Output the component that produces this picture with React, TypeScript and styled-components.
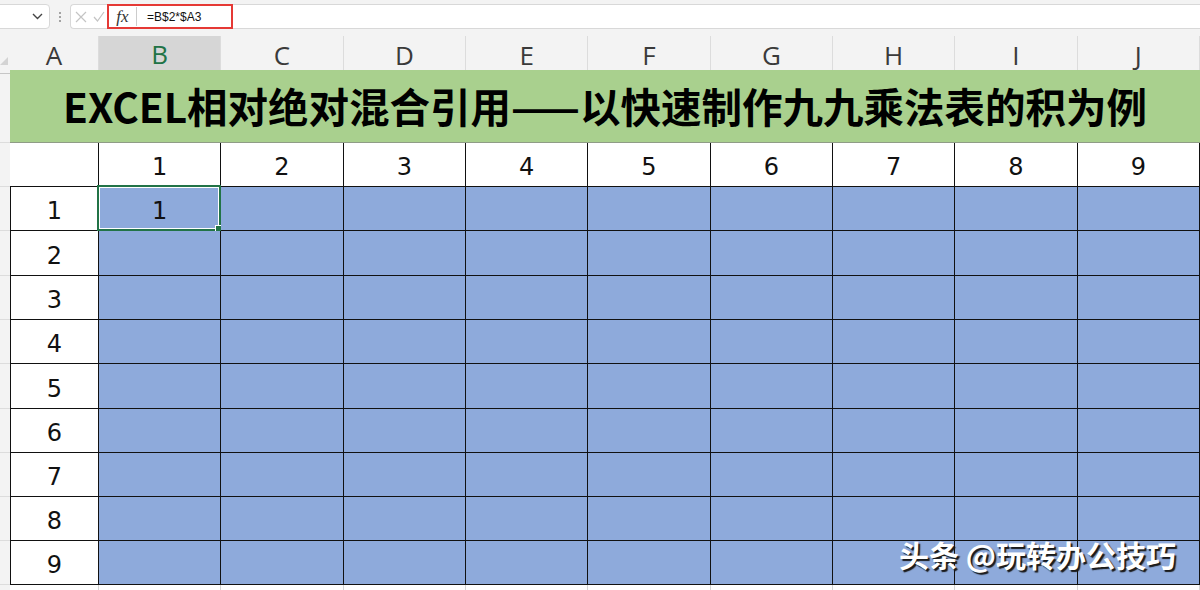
import React from 'react'
import styled, { createGlobalStyle, css } from 'styled-components'

const colors = {
    green: '#217346',
    title: '#a9d08e',
    blue: '#8eaadb',
    header: '#f3f3f3',
    headerSel: '#d6d6d6',
    grid: '#d4d4d4',
    red: '#e53935',
}

const GlobalStyle = createGlobalStyle`
    * { box-sizing: border-box; }
    html, body { margin: 0; padding: 0; background: #fff; }
    body { font-family: 'Noto Sans', 'Noto Sans CJK SC', sans-serif; overflow: hidden; }
`

const Page = styled.div`
    position: relative;
    width: 1200px;
    height: 590px;
    overflow: hidden;
    background: #fff;
`

const FormulaBar = styled.div`
    height: 36px;
    display: flex;
    align-items: center;
    gap: 9px;
    padding: 0 0 3px 0;
    background: ${colors.header};
`

const NameBox = styled.div`
    width: 56px;
    height: 25px;
    margin-left: -6px;
    background: #fff;
    border: 1px solid #d8d8d8;
    border-radius: 4px;
    display: flex;
    align-items: center;
    justify-content: flex-end;
    padding-right: 6px;
`

const Dots = styled.div`
    display: flex;
    flex-direction: column;
    gap: 2px;
    span {
        width: 2px;
        height: 2px;
        background: #888;
        border-radius: 50%;
    }
`

const FormulaBox = styled.div`
    flex: 1;
    height: 25px;
    background: #fff;
    border: 1px solid #d8d8d8;
    border-right: none;
    border-radius: 4px 0 0 4px;
    display: flex;
    align-items: center;
    padding-left: 4px;
    gap: 6px;
`

const RedFrame = styled.div`
    display: flex;
    align-items: center;
    height: 25px;
    width: 126px;
    border: 2px solid ${colors.red};
    margin-left: -4px;
`

const Fx = styled.span`
    font-family: 'Liberation Serif', serif;
    font-style: italic;
    font-size: 17px;
    color: #333;
    width: 28px;
    text-align: center;
    border-right: 1px solid #ccc;
    line-height: 19px;
`

const FormulaText = styled.span`
    font-family: 'Liberation Sans', sans-serif;
    font-size: 12px;
    color: #111;
    padding-left: 10px;
`

const Row = styled.div<{ $h: number }>`
    display: grid;
    grid-template-columns: 10px 89px repeat(9, 1fr);
    height: ${(p) => p.$h}px;
`

const Corner = styled.div`
    background: ${colors.header};
    border-bottom: 1px solid #c6c6c6;
    position: relative;
    &:after {
        content: '';
        position: absolute;
        left: 0;
        bottom: 8px;
        border-left: 8px solid transparent;
        border-bottom: 8px solid #d3d3d3;
    }
`

const ColHead = styled.div<{ $sel?: boolean }>`
    display: flex;
    align-items: center;
    justify-content: center;
    font-family: 'Open Sans', sans-serif;
    font-size: 26px;
    color: #3a3a3a;
    background: ${colors.header};
    border-right: 1px solid #dcdcdc;
    border-bottom: 1px solid #c6c6c6;
    ${(p) =>
        p.$sel &&
        css`
            background: ${colors.headerSel};
            color: ${colors.green};
            border-bottom: 2px solid ${colors.green};
        `}
`

const RowHead = styled.div`
    background: ${colors.header};
    border-bottom: 1px solid #dcdcdc;
`

const Title = styled.div`
    grid-column: 2 / span 10;
    background: ${colors.title};
    border-bottom: 1px solid #8f9c86;
    display: flex;
    align-items: center;
    justify-content: center;
    font-family: 'Noto Sans CJK SC', sans-serif;
    font-weight: 700;
    font-size: 40.5px;
    color: #000;
    padding-bottom: 1px;
`

const Cell = styled.div<{ $fill?: boolean; $left?: boolean; $empty?: boolean }>`
    position: relative;
    display: flex;
    align-items: center;
    justify-content: center;
    font-family: 'DejaVu Sans', sans-serif;
    font-size: 24px;
    color: #111;
    padding-top: 5px;
    background: ${(p) => (p.$fill ? colors.blue : '#fff')};
    border-right: 1px solid #111;
    border-bottom: 1px solid #111;
    ${(p) => p.$left && css`border-left: 1px solid #111;`}
    ${(p) =>
        p.$empty &&
        css`
            border-right-color: ${colors.grid};
            border-bottom-color: ${colors.grid};
        `}
`

const Selected = styled.div`
    position: absolute;
    inset: -2px -1px -1px -2px;
    border: 2px solid ${colors.green};
    box-shadow: inset 0 0 0 1px #fff;
    &:after {
        content: '';
        position: absolute;
        right: -4px;
        bottom: -4px;
        width: 6px;
        height: 6px;
        background: ${colors.green};
        border: 1px solid #fff;
    }
`

const Watermark = styled.div`
    position: absolute;
    left: 899px;
    top: 532px;
    font-family: 'Noto Sans CJK SC', sans-serif;
    font-size: 30px;
    font-weight: 700;
    color: #fff;
    text-shadow: 2px 2px 1px #1a1a1a;
`

const letters = ['A', 'B', 'C', 'D', 'E', 'F', 'G', 'H', 'I', 'J']
const nums = [1, 2, 3, 4, 5, 6, 7, 8, 9]
const rowHeights = [44, 45, 44, 44, 45, 44, 44, 44, 44]

const Chevron = () => (
    <svg width='11' height='7' viewBox='0 0 11 7'>
        <path d='M1 1 L5.5 5.5 L10 1' fill='none' stroke='#444' strokeWidth='1.4' />
    </svg>
)

const CrossIcon = () => (
    <svg width='12' height='12' viewBox='0 0 12 12'>
        <path d='M1 1 L11 11 M11 1 L1 11' stroke='#c4c4c4' strokeWidth='1.2' />
    </svg>
)

const CheckIcon = () => (
    <svg width='12' height='11' viewBox='0 0 12 11'>
        <path d='M1 6 L4.5 10 L11 1' fill='none' stroke='#c4c4c4' strokeWidth='1.2' />
    </svg>
)

const App = () => {
    return (
        <Page>
            <GlobalStyle />
            <FormulaBar>
                <NameBox>
                    <Chevron />
                </NameBox>
                <Dots>
                    <span />
                    <span />
                    <span />
                </Dots>
                <FormulaBox>
                    <CrossIcon />
                    <CheckIcon />
                    <RedFrame>
                        <Fx>fx</Fx>
                        <FormulaText>=B$2*$A3</FormulaText>
                    </RedFrame>
                </FormulaBox>
            </FormulaBar>

            <Row $h={34}>
                <Corner />
                {letters.map((l) => (
                    <ColHead key={l} $sel={l === 'B'}>
                        {l}
                    </ColHead>
                ))}
            </Row>

            <Row $h={73}>
                <RowHead />
                <Title>EXCEL相对绝对混合引用——以快速制作九九乘法表的积为例</Title>
            </Row>

            <Row $h={44}>
                <RowHead />
                <Cell />
                {nums.map((n) => (
                    <Cell key={n}>{n}</Cell>
                ))}
            </Row>

            {nums.map((r, i) => (
                <Row key={r} $h={rowHeights[i]}>
                    <RowHead />
                    <Cell $left>{r}</Cell>
                    {nums.map((c) => (
                        <Cell key={c} $fill>
                            {r === 1 && c === 1 ? '1' : ''}
                            {r === 1 && c === 1 && <Selected />}
                        </Cell>
                    ))}
                </Row>
            ))}

            <Row $h={20}>
                <RowHead />
                {letters.map((l) => (
                    <Cell key={l} $empty />
                ))}
            </Row>

            <Watermark>头条 @玩转办公技巧</Watermark>
        </Page>
    )
}

export default App
